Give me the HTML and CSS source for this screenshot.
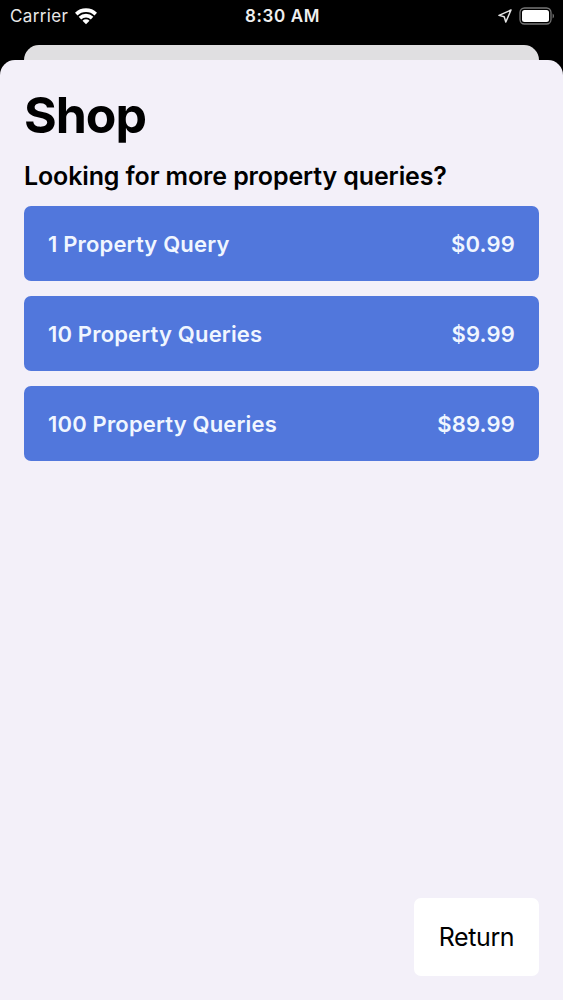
FILE: index.html
```html
<!DOCTYPE html>
<html lang="en">
<head>
    <meta charset="UTF-8">
    <meta name="viewport" content="width=device-width, initial-scale=1.0">
    <title>Shop</title>
    <link rel="stylesheet" href="styles.css">
</head>
<body>
    <div class="status">
        <div class="carrier">
            <span>Carrier</span>
            <svg class="wifi" viewBox="0 0 24 18">
                <path d="M1 5.8 A15.8 15.8 0 0 1 23 5.8 L20.5 8.5 A12.2 12.2 0 0 0 3.5 8.5 Z"/>
                <path d="M4.7 9.8 A10.4 10.4 0 0 1 19.3 9.8 L16.8 12.4 A6.9 6.9 0 0 0 7.2 12.4 Z"/>
                <path d="M8.5 13.8 A5 5 0 0 1 15.5 13.8 L12 17.3 Z"/>
            </svg>
        </div>
        <div class="time">8:30 AM</div>
        <div class="indicators">
            <svg class="location" viewBox="0 0 14 14">
                <path d="M13 1 L1 6.4 L6.2 7.8 L7.8 13 Z"/>
            </svg>
            <svg class="battery" viewBox="0 0 36 18">
                <rect class="shell" x="1" y="1" width="31" height="16" rx="4.5"/>
                <rect class="charge" x="3" y="3" width="27" height="12" rx="2.5"/>
                <path class="cap" d="M33.6 6.5 Q35 7.2 35 9 Q35 10.8 33.6 11.5 Z"/>
            </svg>
        </div>
    </div>
    <div class="back-card"></div>
    <div class="sheet">
        <h1>Shop</h1>
        <h2>Looking for more property queries?</h2>
        <div class="products">
            <button class="product"><span class="name">1 Property Query</span><span class="price">$0.99</span></button>
            <button class="product"><span class="name">10 Property Queries</span><span class="price">$9.99</span></button>
            <button class="product"><span class="name">100 Property Queries</span><span class="price">$89.99</span></button>
        </div>
        <button class="return">Return</button>
    </div>
</body>
</html>
```
FILE: styles.css
```css
*{
    margin: 0;
    padding: 0;
    box-sizing: border-box;
}
body{
    background: #000;
    height: 100vh;
    display: flex;
    flex-direction: column;
    font-family: Inter, "Liberation Sans", sans-serif;
    overflow: hidden;
}
button{
    font-family: inherit;
    border: none;
    cursor: pointer;
}
.status{
    height: 45px;
    padding: 0 8px 14px 10px;
    display: grid;
    grid-template-columns: 1fr auto 1fr;
    align-items: center;
    color: #fff;
    font-size: 17px;
}
.carrier{
    display: flex;
    align-items: center;
    gap: 6px;
    letter-spacing: 0.35px;
    color: #e8e8e8;
}
.wifi{
    width: 24px;
    height: 18px;
    fill: #fff;
}
.time{
    color: #f0f0f0;
    font-weight: 600;
    letter-spacing: 0.6px;
}
.indicators{
    display: flex;
    justify-content: flex-end;
    align-items: center;
    gap: 7px;
}
.location{
    width: 14px;
    height: 14px;
    fill: none;
    stroke: #e4e4e4;
    stroke-width: 1.5;
    stroke-linejoin: round;
}
.battery{
    width: 36px;
    height: 18px;
}
.shell{
    fill: none;
    stroke: #777;
    stroke-width: 1.3;
}
.charge{
    fill: #fff;
}
.cap{
    fill: #777;
}
.back-card{
    height: 15px;
    margin: 0 24px;
    background: #e0dfe1;
    border-radius: 15px 15px 0 0;
}
.sheet{
    flex: 1;
    display: flex;
    flex-direction: column;
    padding: 24px;
    background: #f3f0f9;
    border-radius: 15px 15px 0 0;
}
h1{
    height: 62px;
    line-height: 62px;
    font-size: 50px;
    letter-spacing: -1px;
}
h2{
    height: 60px;
    line-height: 60px;
    font-size: 25px;
    font-weight: 600;
    letter-spacing: -0.13px;
}
.products{
    display: flex;
    flex-direction: column;
    gap: 15px;
}
.product{
    height: 75px;
    display: flex;
    justify-content: space-between;
    align-items: center;
    padding: 0 24px;
    background: #5177dc;
    border-radius: 7px;
    color: #f0f6ff;
    font-size: 22px;
    font-weight: 600;
    letter-spacing: 0.17px;
}
.return{
    width: 125px;
    height: 78px;
    margin-top: auto;
    align-self: flex-end;
    background: #fff;
    border-radius: 7px;
    color: #000;
    font-size: 25px;
    letter-spacing: -0.4px;
}
```
